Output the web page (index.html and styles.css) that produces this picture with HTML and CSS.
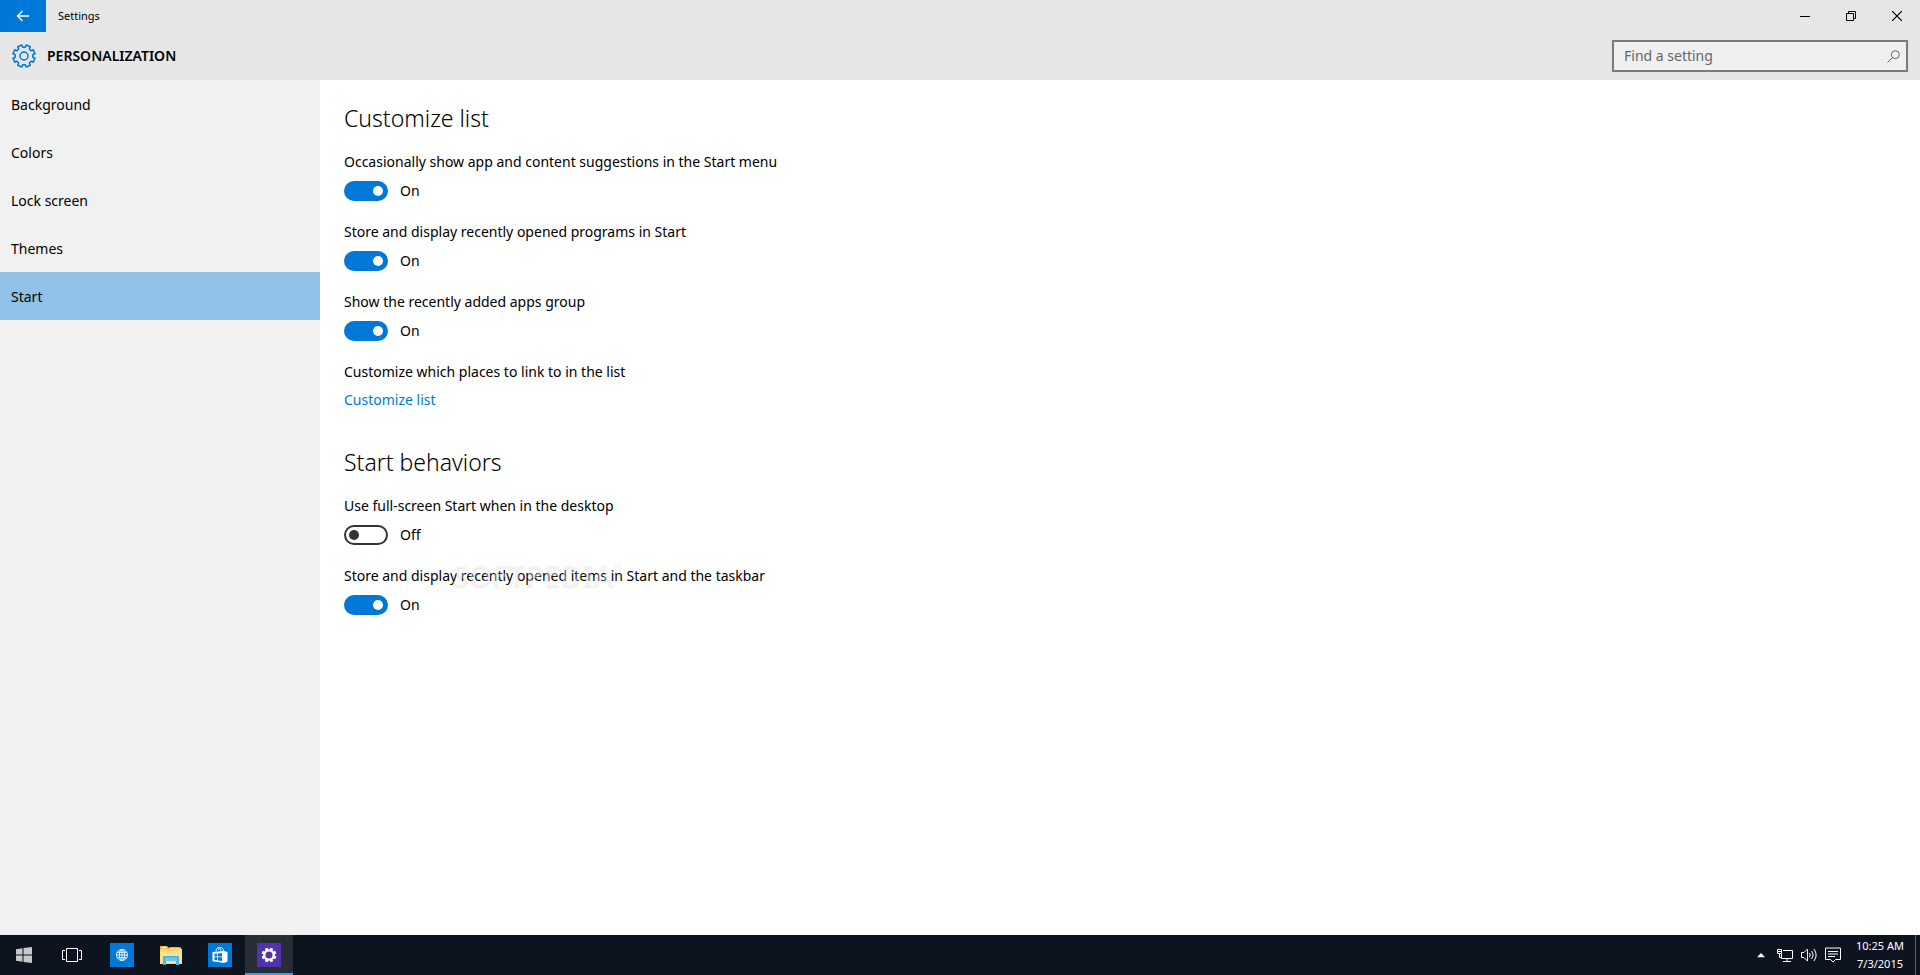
FILE: index.html
```
<!DOCTYPE html>
<html lang="en">
<head>
    <meta charset="UTF-8">
    <meta name="viewport" content="width=device-width, initial-scale=1.0">
    <title>Settings</title>
    <link rel="stylesheet" href="styles.css">
</head>
<body>

    <!-- Title Bar -->
    <header class="title-bar">
        <button class="back-button" aria-label="Back">
            <svg width="14" height="12" viewBox="0 0 14 12"><path d="M13 6H1.5M6.5 1L1.5 6l5 5" fill="none" stroke="#fff" stroke-width="1.3"/></svg>
        </button>
        <span class="window-title">Settings</span>
        <div class="window-buttons">
            <button aria-label="Minimize">
                <svg width="10" height="10" viewBox="0 0 10 10"><path d="M0 5.5h10" stroke="#000"/></svg>
            </button>
            <button aria-label="Restore">
                <svg width="10" height="10" viewBox="0 0 10 10"><path d="M.5 2.5h7v7h-7zM2.5 2.5v-2h7v7h-2" fill="none" stroke="#000"/></svg>
            </button>
            <button aria-label="Close">
                <svg width="10" height="10" viewBox="0 0 10 10"><path d="M0 0l10 10M10 0L0 10" stroke="#000" stroke-width="1.2"/></svg>
            </button>
        </div>
    </header>

    <!-- Page Header -->
    <div class="page-header">
        <svg class="gear" width="24" height="24" viewBox="0 0 24 24">
            <path d="M14.1 1L18.3 2.7 17.3 5 19 6.7 21.3 5.7 23 9.9 20.7 10.75V13.25L23 14.1 21.3 18.3 19 17.3 17.3 19 18.3 21.3 14.1 23 13.25 20.7H10.75L9.9 23 5.7 21.3 6.7 19 5 17.3 2.7 18.3 1 14.1 3.3 13.25V10.75L1 9.9 2.7 5.7 5 6.7 6.7 5 5.7 2.7 9.9 1 10.75 3.3H13.25Z" fill="none" stroke="#0078d7" stroke-width="1.5" stroke-linejoin="round"/>
            <circle cx="12" cy="12" r="4" fill="none" stroke="#0078d7" stroke-width="1.5"/>
        </svg>
        <h1>PERSONALIZATION</h1>
        <div class="search-box">
            <input type="text" placeholder="Find a setting" aria-label="Find a setting">
            <svg width="13" height="13" viewBox="0 0 13 13"><circle cx="8.3" cy="4.7" r="4" fill="none" stroke="#666"/><path d="M5.4 7.6L.5 12.5" stroke="#666"/></svg>
        </div>
    </div>

    <div class="main">
        <!-- Sidebar -->
        <nav class="sidebar">
            <a href="#">Background</a>
            <a href="#">Colors</a>
            <a href="#">Lock screen</a>
            <a href="#">Themes</a>
            <a href="#" class="active">Start</a>
        </nav>

        <!-- Settings -->
        <main class="content">
            <section>
                <h2>Customize list</h2>
                <div class="setting">
                    <label for="suggestions">Occasionally show app and content suggestions in the Start menu</label>
                    <div class="toggle-row"><input type="checkbox" class="toggle" id="suggestions" checked><span>On</span></div>
                </div>
                <div class="setting">
                    <label for="programs">Store and display recently opened programs in Start</label>
                    <div class="toggle-row"><input type="checkbox" class="toggle" id="programs" checked><span>On</span></div>
                </div>
                <div class="setting">
                    <label for="added">Show the recently added apps group</label>
                    <div class="toggle-row"><input type="checkbox" class="toggle" id="added" checked><span>On</span></div>
                </div>
                <div class="setting">
                    <p>Customize which places to link to in the list</p>
                    <a href="#">Customize list</a>
                </div>
            </section>

            <section>
                <h2>Start behaviors</h2>
                <div class="setting">
                    <label for="fullscreen">Use full-screen Start when in the desktop</label>
                    <div class="toggle-row"><input type="checkbox" class="toggle" id="fullscreen"><span>Off</span></div>
                </div>
                <div class="setting">
                    <label for="items">Store and display recently opened items in Start and the taskbar</label>
                    <div class="toggle-row"><input type="checkbox" class="toggle" id="items" checked><span>On</span></div>
                    <span class="watermark">SOFTPEDIA<sup>®</sup></span>
                </div>
            </section>
        </main>
    </div>

    <!-- Taskbar -->
    <footer class="taskbar">
        <button aria-label="Start">
            <svg width="16" height="16" viewBox="0 0 16 16" fill="#c8c9cb"><path d="M0 2.3L6.500 1.300V7.500H0zM7.500 1.100L16 0V7.500H7.500zM0 8.500H6.500V14.700L0 13.700zM7.500 8.500H16V16L7.500 14.900z"/></svg>
        </button>
        <button aria-label="Task View">
            <svg width="20" height="14" viewBox="0 0 20 14" fill="none" stroke="#fff"><path d="M4.5.5h11v13h-11zM3 2.5H.5v9H3M17 2.5h2.5v9H17"/></svg>
        </button>
        <div class="pinned">
            <button aria-label="Browser">
                <svg width="24" height="24" viewBox="0 0 24 24"><path d="M0 0h24v24H0z" fill="#0078d7"/><g fill="none" stroke="#fff" stroke-width=".9"><circle cx="12" cy="12" r="5.5"/><ellipse cx="12" cy="12" rx="2.6" ry="5.5"/><path d="M12 6.5v11M6.5 12h11M7.3 9.3h9.4M7.3 14.7h9.4"/></g></svg>
            </button>
            <button aria-label="File Explorer">
                <svg width="24" height="24" viewBox="0 0 24 24"><path d="M1 3h7l1.5 1.5H22V20H1z" fill="#e8b949"/><path d="M3 3.8h4.5v1.5H3z" fill="#fff2b8"/><path d="M1 6h9l1.5-1.5H20l3 1.5v15H1z" fill="#fbe08b"/><path d="M1 6h9l1.5-1.5H20V8H1z" fill="#f6d373"/><path d="M4 14q0-1 1-1h14q1 0 1 1v8h-3v-4H7v4H4z" fill="#4ab4e6"/><path d="M6 14.5h12V18H6z" fill="#6cc8ef"/></svg>
            </button>
            <button aria-label="Store">
                <svg width="24" height="24" viewBox="0 0 24 24"><path d="M0 0h24v24H0z" fill="#0078d7"/><path d="M4.5 9L16 8l3.500 1v9.500L16 20 4.500 18.300z" fill="#fff"/><path d="M8 8.500C8 3.500 13 3.500 13 8M10.500 7c.5-4 5-3 5 1" fill="none" stroke="#fff" stroke-width=".9"/><path d="M6.500 10.800l2.800-.3v3H6.500zM10 10.400l4-.4v3.500h-4zM6.500 14.300h2.800v3l-2.800-.4zM10 14.300h4V18l-4-.6z" fill="#0078d7"/></svg>
            </button>
            <button class="running" aria-label="Settings">
                <svg width="24" height="24" viewBox="0 0 24 24"><path d="M0 0h24v24H0z" fill="#5133ab"/><g transform="translate(4 4) scale(.667)"><path d="M14.1 1L18.3 2.7 17.3 5 19 6.7 21.3 5.7 23 9.9 20.7 10.75V13.25L23 14.1 21.3 18.3 19 17.3 17.3 19 18.3 21.3 14.1 23 13.25 20.7H10.75L9.9 23 5.7 21.3 6.7 19 5 17.3 2.7 18.3 1 14.1 3.3 13.25V10.75L1 9.9 2.7 5.7 5 6.7 6.7 5 5.7 2.7 9.9 1 10.75 3.3H13.25Z" fill="#fff"/><circle cx="12" cy="12" r="5.3" fill="#5133ab"/></g></svg>
            </button>
        </div>

        <!-- Tray -->
        <div class="tray">
            <button aria-label="Show hidden icons">
                <svg width="16" height="16" viewBox="0 0 16 16"><path d="M4 10.2L8 6l4 4.2z" fill="#fff"/></svg>
            </button>
            <button aria-label="Network">
                <svg width="16" height="16" viewBox="0 0 16 16" fill="none" stroke="#fff"><path d="M6 3.5h9.5v8H4.5V7M10 11.5v3M6 14.5h8M.5 2.5h4v4h-4zM2.5 6.5v4h2M1 4.5h3"/></svg>
            </button>
            <button aria-label="Volume">
                <svg width="16" height="16" viewBox="0 0 16 16" fill="none" stroke="#fff"><path d="M.5 5.5h2.5L6.5 2v12L3 10.500H.5zM8.500 6q1.500 2 0 4M10.700 4q3 4 0 8M12.900 2q4.500 6 0 12"/></svg>
            </button>
            <button aria-label="Notifications">
                <svg width="16" height="16" viewBox="0 0 16 16" fill="none" stroke="#fff"><path d="M.5 1h15v11.500h-5L8 15l-2.500-2.500h-5zM3 4.500h10M3 7h10M3 9.500h7"/></svg>
            </button>
            <div class="clock">
                <span>10:25 AM</span>
                <span>7/3/2015</span>
            </div>
            <button class="show-desktop" aria-label="Show desktop"></button>
        </div>
    </footer>

    <script>
        // Keep the On / Off text in step with its toggle
        document.querySelectorAll('.toggle').forEach(toggle => {
            toggle.addEventListener('change', () => {
                toggle.nextElementSibling.textContent = toggle.checked ? 'On' : 'Off';
            });
        });
    </script>

</body>
</html>
```
FILE: styles.css
```
* {
    box-sizing: border-box;
}
body {
    display: flex;
    flex-direction: column;
    min-height: 100vh;
    margin: 0;
    font-family: "Segoe UI", "Noto Sans", "Open Sans", sans-serif;
    font-size: 14px;
    line-height: 20px;
    color: #000;
    background-color: #fff;
}
h1, h2, p {
    margin: 0;
}
button {
    display: flex;
    align-items: center;
    justify-content: center;
    padding: 0;
    border: none;
    background: none;
}
a {
    text-decoration: none;
}

/* Title bar */
.title-bar {
    display: flex;
    align-items: center;
    height: 32px;
    background-color: #e6e6e6;
}
.back-button {
    width: 46px;
    height: 32px;
    background-color: #0078d7;
}
.window-title {
    margin-left: 12px;
    font-size: 11px;
}
.window-buttons {
    display: flex;
    margin-left: auto;
}
.window-buttons button {
    width: 46px;
    height: 32px;
}

/* Page header */
.page-header {
    display: flex;
    align-items: center;
    height: 48px;
    padding: 0 12px;
    background-color: #e6e6e6;
}
.page-header h1 {
    margin-left: 11px;
    font-size: 14px;
    font-weight: 600;
}
.search-box {
    display: flex;
    align-items: center;
    width: 296px;
    height: 32px;
    margin-left: auto;
    padding: 0 6px 0 10px;
    border: 2px solid #7a7a7a;
    background-color: #f0f0f0;
}
.search-box input {
    flex: 1;
    min-width: 0;
    padding: 0;
    border: none;
    outline: none;
    background: none;
    font: inherit;
}
.search-box input::placeholder {
    color: #666;
}

/* Sidebar and content */
.main {
    display: flex;
    flex: 1;
}
.sidebar {
    width: 320px;
    background-color: #f1f1f1;
}
.sidebar a {
    display: block;
    padding: 15px 11px 13px;
    color: #000;
}
.sidebar a.active {
    background-color: #91c1e7;
}
.content {
    flex: 1;
    padding: 22px 24px;
}
.content section {
    margin-bottom: 36px;
}
.content h2 {
    margin-bottom: 18px;
    font-size: 23px;
    font-weight: 300;
    line-height: 32px;
}
.setting {
    position: relative;
    margin-bottom: 21px;
}
.setting:last-child {
    margin-bottom: 0;
}
.setting label,
.setting a {
    display: block;
}
.setting a {
    margin-top: 8px;
    color: #0078d7;
}
.toggle-row {
    display: flex;
    align-items: center;
    gap: 12px;
    margin-top: 9px;
}
.toggle {
    appearance: none;
    display: flex;
    align-items: center;
    width: 44px;
    height: 20px;
    margin: 0;
    padding: 0 3px;
    border: 2px solid #333;
    border-radius: 10px;
}
.toggle::before {
    content: "";
    width: 10px;
    height: 10px;
    border-radius: 50%;
    background-color: #333;
}
.toggle:checked {
    justify-content: flex-end;
    border-color: #0078d7;
    background-color: #0078d7;
}
.toggle:checked::before {
    background-color: #fff;
}
.watermark {
    position: absolute;
    top: -6px;
    left: 108px;
    font-size: 30px;
    font-weight: 600;
    line-height: 30px;
    color: rgba(255, 255, 255, 0.4);
    text-shadow: 0 2px 2px rgba(0, 0, 0, 0.08);
    pointer-events: none;
}
.watermark sup {
    font-size: 10px;
    line-height: 10px;
    vertical-align: top;
}

/* Taskbar */
.taskbar {
    display: flex;
    height: 40px;
    color: #fff;
    background-color: #0d131f;
}
.taskbar button {
    width: 48px;
    height: 40px;
}
.pinned {
    display: flex;
    gap: 1px;
    margin-left: 2px;
}
.taskbar .running {
    border-top: 2px solid transparent;
    border-bottom: 2px solid #4a9be0;
    background-color: #282c36;
}
.tray {
    display: flex;
    margin-left: auto;
}
.tray button {
    width: 24px;
}
.clock {
    display: flex;
    flex-direction: column;
    justify-content: center;
    width: 70px;
    font-size: 11px;
    line-height: 18px;
    text-align: center;
}
.tray .show-desktop {
    width: 5px;
    border-left: 1px solid #5d626b;
}
```
